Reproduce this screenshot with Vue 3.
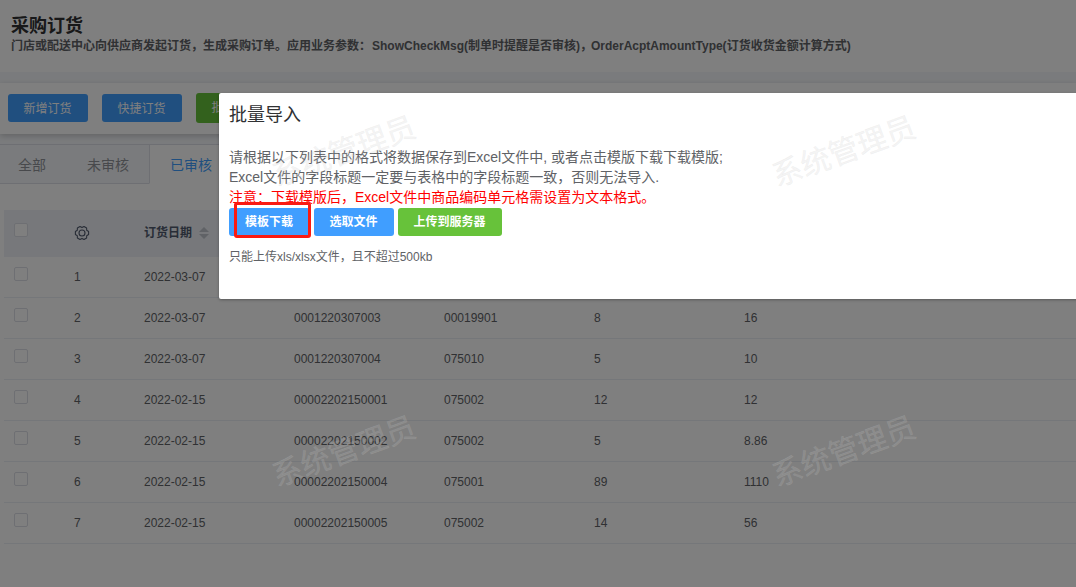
<template>
  <div class="page">
    <header class="page-header">
      <h1>采购订货</h1>
      <p>门店或配送中心向供应商发起订货，生成采购订单。应用业务参数：<span class="en">ShowCheckMsg(</span>制单时提醒是否审核)，<span class="en tight">OrderAcptAmountType(</span>订货收货金额计算方式)</p>
    </header>

    <div class="toolbar">
      <button class="btn primary">新增订货</button>
      <button class="btn primary">快捷订货</button>
      <button class="btn success large">批量导入</button>
    </div>

    <div class="content">
      <nav class="tabs">
        <div v-for="tab in tabs" :key="tab" class="tab" :class="{ active: tab === activeTab }" @click="activeTab = tab">{{ tab }}</div>
      </nav>

      <div class="table">
        <div class="row head">
          <div class="check"><i class="checkbox"></i></div>
          <div class="cell">
            <svg class="gear" viewBox="0 0 16 16" width="16" height="16">
              <path d="M14.6 6.5V9.5L12.7 10.7 12.6 13 10 14.5 8 13.4 6 14.5 3.4 13 3.3 10.7 1.4 9.5V6.5L3.3 5.3 3.4 3 6 1.5 8 2.6 10 1.5 12.6 3 12.7 5.3z" />
              <circle cx="8" cy="8" r="3" />
            </svg>
          </div>
          <div class="cell">订货日期<span class="sort"><i class="up"></i><i class="down"></i></span></div>
          <div class="cell"></div>
          <div class="cell"></div>
          <div class="cell"></div>
          <div class="cell"></div>
        </div>
        <div v-for="(row, index) in rows" :key="index" class="row">
          <div class="check"><i class="checkbox"></i></div>
          <div class="cell">{{ index + 1 }}</div>
          <div v-for="(value, i) in row" :key="i" class="cell">{{ value }}</div>
        </div>
      </div>
    </div>

    <div class="mask"></div>

    <section class="dialog">
      <h2>批量导入</h2>
      <div class="dialog-body">
        <p>请根据以下列表中的格式将数据保存到Excel文件中, 或者点击模版下载下载模版;</p>
        <p>Excel文件的字段标题一定要与表格中的字段标题一致，否则无法导入.</p>
        <p class="warn">注意：下载模版后，Excel文件中商品编码单元格需设置为文本格式。</p>
        <div class="actions">
          <button class="btn primary">模板下载</button>
          <button class="btn primary">选取文件</button>
          <button class="btn success">上传到服务器</button>
          <span class="marker"></span>
        </div>
        <p class="tip">只能上传xls/xlsx文件，且不超过500kb</p>
      </div>
    </section>

    <div class="watermark">
      <span v-for="(mark, i) in marks" :key="i" :style="{ left: mark.x + 'px', top: mark.y + 'px' }">系统管理员</span>
    </div>
  </div>
</template>

<script setup>
import { ref } from 'vue';

const tabs = ['全部', '未审核', '已审核'];
const activeTab = ref('已审核');

// 日期、单号、供应商、数量、金额
const rows = [
  ['2022-03-07', '', '', '', ''],
  ['2022-03-07', '0001220307003', '00019901', '8', '16'],
  ['2022-03-07', '0001220307004', '075010', '5', '10'],
  ['2022-02-15', '00002202150001', '075002', '12', '12'],
  ['2022-02-15', '00002202150002', '075002', '5', '8.86'],
  ['2022-02-15', '00002202150004', '075001', '89', '1110'],
  ['2022-02-15', '00002202150005', '075002', '14', '56'],
];

// 水印中心点
const marks = [
  { x: 343.5, y: 151.5 },
  { x: 843.5, y: 151.5 },
  { x: 343.5, y: 451.5 },
  { x: 843.5, y: 451.5 },
];
</script>

<style>
body {
  margin: 0;
  overflow: hidden;
}
</style>

<style scoped>
.page {
  position: relative;
  width: 100%;
  height: 587px;
  overflow: hidden;
  background: #f5f7fa;
  color: #606266;
  font-family: "Liberation Sans", "Noto Sans CJK SC", sans-serif;
  font-size: 12px;
}

h1, h2, p {
  margin: 0;
}

.page-header {
  box-sizing: border-box;
  height: 72px;
  padding: 15px 11px 0;
  background: #fff;
}

h1 {
  color: #303133;
  font-size: 18px;
  line-height: 22px;
}

.page-header p {
  font-weight: bold;
  line-height: 18px;
  white-space: nowrap;
}

.en {
  margin-left: 1px;
}

.en.tight {
  margin-left: -1px;
  letter-spacing: -0.01px;
}

.toolbar {
  display: flex;
  align-items: center;
  box-sizing: border-box;
  height: 51px;
  margin-top: 11px;
  padding: 0 8px 2px;
  gap: 14px;
  background: #fff;
  box-shadow: 0 2px 6px rgba(0, 0, 0, 0.2);
}

.btn {
  box-sizing: border-box;
  height: 28px;
  padding: 0 15px 0 14px;
  border: 1px solid transparent;
  border-width: 0 1px;
  border-radius: 3px;
  color: #fff;
  font-family: inherit;
  font-size: 12px;
  line-height: 28px;
  white-space: nowrap;
}

.toolbar .btn,
.actions .btn:nth-child(2) {
  width: 80px;
}

.toolbar .btn {
  padding-top: 1px;
}

.btn.large {
  height: 30px;
}

.primary {
  background: #409eff;
}

.success {
  background: #67c23a;
}

.content {
  height: 443px;
  margin-top: 10px;
  background: #fff;
}

.tabs {
  display: flex;
  box-sizing: border-box;
  height: 40px;
  border-top: 1px solid #dcdfe6;
  background: #f5f7fa;
}

.tab {
  box-sizing: border-box;
  padding: 0 20px;
  border-bottom: 1px solid #dcdfe6;
  color: #909399;
  font-size: 14px;
  line-height: 40px;
}

.tab:first-child {
  width: 67px;
  padding-left: 18px;
}

.tab:nth-child(2) {
  width: 82px;
}

.tab.active {
  flex: 1;
  border-bottom-color: #fff;
  border-left: 1px solid #dcdfe6;
  background: #fff;
  color: #409eff;
}

.table {
  margin: 26px 0 0 4px;
}

.row {
  display: grid;
  grid-template-columns: 60px 70px repeat(4, 150px) 1fr;
  align-items: center;
  box-sizing: border-box;
  height: 41px;
  border-bottom: 1px solid #ebeef5;
}

.head {
  height: 47px;
  padding-bottom: 2px;
  border: 0;
  background: #eef1f6;
  color: #515a6e;
  font-weight: bold;
}

.check {
  display: flex;
  padding: 0 0 6px 10px;
}

.head .check {
  padding-bottom: 5px;
}

.checkbox {
  box-sizing: border-box;
  width: 14px;
  height: 14px;
  border: 1px solid #dcdfe6;
  border-radius: 2px;
  background: #fff;
}

.cell {
  display: flex;
  align-items: center;
  padding-left: 10px;
  line-height: 20px;
}

.gear {
  fill: none;
  stroke: #515a6e;
  stroke-linejoin: round;
  stroke-width: 1.1;
}

.sort {
  display: flex;
  flex-direction: column;
  gap: 2px;
  margin-left: 7px;
}

.up, .down {
  border: 5px solid transparent;
}

.up {
  border-top: 0;
  border-bottom-color: #c0c4cc;
}

.down {
  border-bottom: 0;
  border-top-color: #c0c4cc;
}

.mask {
  position: absolute;
  inset: 0;
  background: rgba(0, 0, 0, 0.5);
}

.dialog {
  position: absolute;
  top: 93px;
  left: 219px;
  box-sizing: border-box;
  width: 1000px;
  height: 206px;
  padding: 10px;
  border-radius: 2px;
  background: #fff;
  box-shadow: 0 1px 3px rgba(0, 0, 0, 0.3);
}

h2 {
  color: #303133;
  font-size: 18px;
  font-weight: normal;
  line-height: 24px;
}

.dialog-body {
  margin-top: 20px;
  font-size: 14px;
  line-height: 20px;
}

.warn {
  color: #f00;
}

.actions {
  position: relative;
  display: flex;
  gap: 4px;
  margin-top: 1px;
}

.actions .btn {
  font-weight: bold;
}

.actions .btn:first-child {
  width: 81px;
}

.actions .success {
  width: 104px;
}

.marker {
  position: absolute;
  top: -6px;
  left: 5px;
  box-sizing: border-box;
  width: 77px;
  height: 36px;
  border: 3px solid #fb1a12;
  border-radius: 3px;
}

.tip {
  margin-top: 11px;
  font-size: 12px;
}

.watermark {
  position: absolute;
  inset: 0;
  pointer-events: none;
}

.watermark span {
  position: absolute;
  color: rgba(200, 200, 200, 0.2);
  font-size: 30px;
  line-height: 40px;
  white-space: nowrap;
  transform: translate(-50%, -50%) rotate(-20deg);
  -webkit-text-stroke: 0.4px rgba(200, 200, 200, 0.2);
}
</style>
